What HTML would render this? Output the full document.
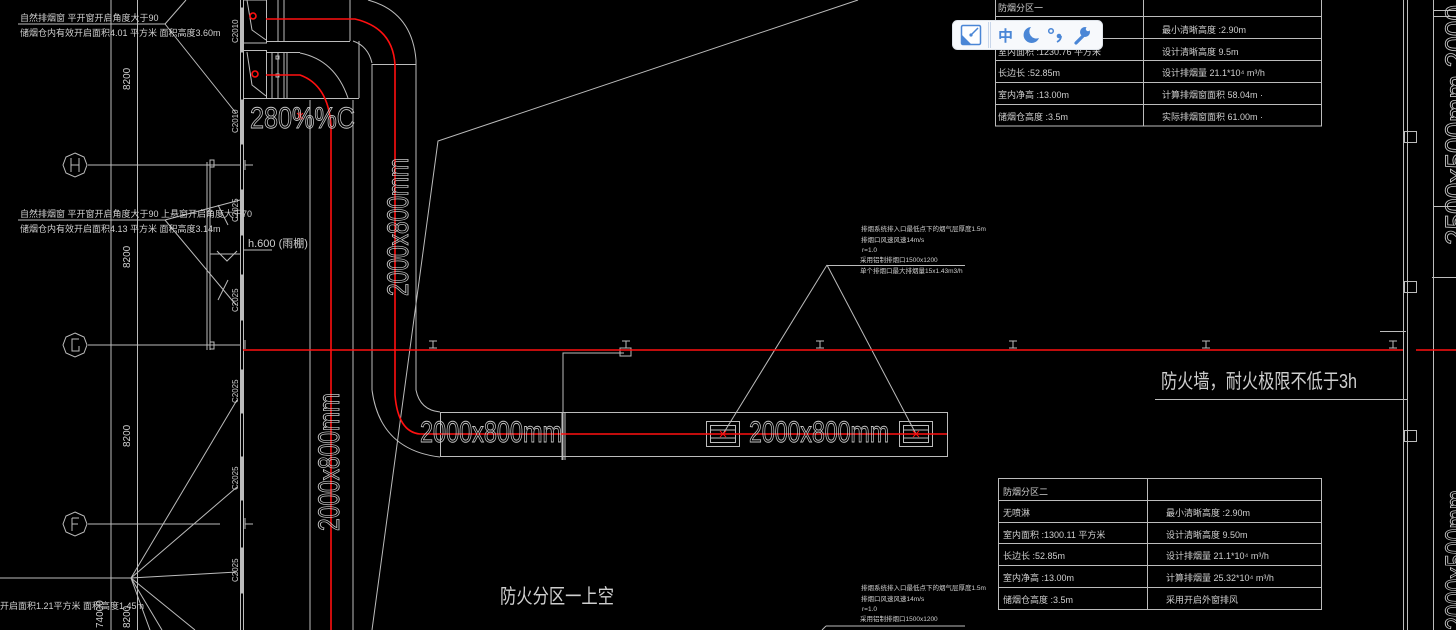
<!DOCTYPE html>
<html><head><meta charset="utf-8">
<style>
html,body{margin:0;padding:0;background:#000;width:1456px;height:630px;overflow:hidden}
svg{display:block}
text{font-family:"Liberation Sans","Noto Sans CJK SC",sans-serif;fill:#cfcfcf}
.t{font-size:9px}
.big{font-family:"Liberation Sans Narrow","Liberation Sans",sans-serif;fill:none;stroke:#c4c4c4;stroke-width:0.9}
.ax{font-size:15px;fill:none;stroke:#c4c4c4;stroke-width:0.8}
</style></head><body>
<svg width="1456" height="630" viewBox="0 0 1456 630" xmlns="http://www.w3.org/2000/svg">
<g stroke="#bcbcbc" stroke-width="1" fill="none">
<line x1="111" y1="0" x2="111" y2="630"/>
<line x1="137.5" y1="0" x2="137.5" y2="630"/>
<line x1="240.5" y1="0" x2="240.5" y2="630"/>
<line x1="243.5" y1="0" x2="243.5" y2="630"/>
<rect x="241" y="8" width="2" height="44" fill="#bcbcbc"/>
<rect x="241" y="100" width="2" height="44" fill="#bcbcbc"/>
<rect x="241" y="190" width="2" height="45" fill="#bcbcbc"/>
<rect x="241" y="275" width="2" height="45" fill="#bcbcbc"/>
<rect x="241" y="370" width="2" height="43" fill="#bcbcbc"/>
<rect x="241" y="457" width="2" height="43" fill="#bcbcbc"/>
<rect x="241" y="548" width="2" height="45" fill="#bcbcbc"/>
<polygon points="75,153 84,157 87,165 84,173 75,177 66,173 63,165 66,157"/>
<polygon points="75,333 84,337 87,345 84,353 75,357 66,353 63,345 66,337"/>
<polygon points="75,512 84,516 87,524 84,532 75,536 66,532 63,524 66,516"/>
<path d="M71 158 V172 M79 158 V172 M71 165 H79"/>
<path d="M79 339 H72 V351 H79 V346"/>
<path d="M72 518 V531 M72 518 H79 M72 524 H78"/>
<line x1="88" y1="165" x2="240" y2="165"/>
<line x1="88" y1="345" x2="240" y2="345"/>
<line x1="88" y1="524" x2="220" y2="524"/>
<line x1="207" y1="162" x2="207" y2="350"/>
<line x1="210" y1="162" x2="210" y2="350"/>
<rect x="210" y="160" width="4" height="7"/>
<rect x="210" y="342" width="4" height="7"/>
<line x1="210" y1="254" x2="240" y2="254"/>
<polyline points="217,251 227,261 237,251"/>
<line x1="245" y1="160" x2="245" y2="170"/><line x1="245" y1="165" x2="253" y2="165"/>
<line x1="245" y1="340" x2="245" y2="349"/>
<line x1="245" y1="518" x2="245" y2="529"/><line x1="245" y1="524" x2="253" y2="524"/>
<line x1="243" y1="250" x2="272" y2="250"/>
<line x1="18" y1="24" x2="165" y2="24"/>
<line x1="165" y1="24" x2="186" y2="0"/>
<line x1="165" y1="24" x2="236" y2="113"/>
<line x1="18" y1="220" x2="165" y2="220"/>
<line x1="165" y1="220" x2="240" y2="200"/>
<line x1="165" y1="220" x2="236" y2="305"/>
<line x1="218" y1="205" x2="228" y2="225"/>
<line x1="218" y1="300" x2="228" y2="280"/>
<line x1="0" y1="578" x2="131" y2="578"/>
<line x1="131" y1="578" x2="237" y2="400"/>
<line x1="131" y1="578" x2="237" y2="487"/>
<line x1="131" y1="578" x2="237" y2="572"/>
<line x1="131" y1="578" x2="150" y2="630"/>
<line x1="131" y1="578" x2="162" y2="630"/>
<line x1="131" y1="578" x2="195" y2="630"/>
<rect x="243.5" y="0" width="23" height="43"/>
<rect x="243.5" y="50.5" width="23" height="48"/>
<polyline points="247,0 252,30 266,40"/>
<polyline points="247,52 252,85 266,96"/>
<line x1="266" y1="41.5" x2="350" y2="41.5"/>
<line x1="350" y1="0" x2="350" y2="41"/>
<line x1="278" y1="0" x2="278" y2="42"/><line x1="284" y1="0" x2="284" y2="42"/>
<line x1="266" y1="98.5" x2="359" y2="98.5"/>
<line x1="359" y1="41" x2="359" y2="98"/>
<line x1="266" y1="52.5" x2="300" y2="52.5"/>
<line x1="272" y1="52" x2="272" y2="98"/><line x1="278" y1="52" x2="278" y2="98"/><line x1="284" y1="52" x2="284" y2="98"/><line x1="287" y1="52" x2="287" y2="98"/>
<path d="M300 53 Q335 60 348 98"/>
<rect x="276" y="56" width="3" height="3"/><rect x="276" y="74" width="3" height="3"/>
<path d="M368 0 Q412 12 416 60 L416 350"/>
<path d="M353 41 Q368 46 372 63"/>
<line x1="372" y1="64.5" x2="416" y2="64.5"/>
<line x1="372" y1="64" x2="372" y2="390"/>
<path d="M416 350 L416 390 Q420 410 440 412"/>
<path d="M372 390 Q380 450 440 457"/>
<line x1="310" y1="100" x2="310" y2="630"/>
<line x1="353" y1="100" x2="353" y2="630"/>
<rect x="440.5" y="412.5" width="507" height="44"/>
<line x1="562" y1="412" x2="562" y2="460"/><line x1="565" y1="412" x2="565" y2="460"/>
<polyline points="563,460 563,353 624,353"/>
<rect x="620" y="348" width="11" height="8"/>
<rect x="706.5" y="421.5" width="33" height="25"/><rect x="710.5" y="425.5" width="25" height="17"/>
<line x1="711" y1="430" x2="735" y2="430"/><line x1="711" y1="438" x2="735" y2="438"/>
<rect x="899.5" y="421.5" width="33" height="25"/><rect x="903.5" y="425.5" width="25" height="17"/>
<line x1="904" y1="430" x2="928" y2="430"/><line x1="904" y1="438" x2="928" y2="438"/>
<line x1="827" y1="265" x2="723" y2="434"/>
<line x1="827" y1="265" x2="916" y2="434"/>
<line x1="827" y1="265.5" x2="965" y2="265.5"/>
<line x1="826" y1="626" x2="965" y2="626"/>
<line x1="826" y1="626" x2="822" y2="630"/>
<polyline points="858,0 438,141 372,630"/>
<g>
<line x1="429" y1="341" x2="437" y2="341"/><line x1="433" y1="341" x2="433" y2="348"/><line x1="429" y1="348" x2="437" y2="348"/>
<line x1="622" y1="341" x2="630" y2="341"/><line x1="626" y1="341" x2="626" y2="348"/>
<line x1="816" y1="341" x2="824" y2="341"/><line x1="820" y1="341" x2="820" y2="348"/><line x1="816" y1="348" x2="824" y2="348"/>
<line x1="1009" y1="341" x2="1017" y2="341"/><line x1="1013" y1="341" x2="1013" y2="348"/><line x1="1009" y1="348" x2="1017" y2="348"/>
<line x1="1202" y1="341" x2="1210" y2="341"/><line x1="1206" y1="341" x2="1206" y2="348"/><line x1="1202" y1="348" x2="1210" y2="348"/>
<line x1="1389" y1="341" x2="1397" y2="341"/><line x1="1393" y1="341" x2="1393" y2="348"/><line x1="1389" y1="348" x2="1397" y2="348"/>
</g>
<line x1="1155" y1="399.5" x2="1407" y2="399.5"/>
<line x1="1403.5" y1="0" x2="1403.5" y2="630"/>
<line x1="1407.5" y1="0" x2="1407.5" y2="630"/>
<line x1="1433.5" y1="0" x2="1433.5" y2="630"/>
<line x1="1433" y1="206.5" x2="1456" y2="206.5"/>
<line x1="1432" y1="277.5" x2="1456" y2="277.5"/>
<line x1="1380" y1="331.5" x2="1406" y2="331.5"/>
<rect x="1404.5" y="131.5" width="12" height="11"/>
<rect x="1404.5" y="281.5" width="12" height="11"/>
<rect x="1404.5" y="430.5" width="12" height="11"/>
<line x1="1433" y1="10.5" x2="1456" y2="10.5"/>
<line x1="1433" y1="16.5" x2="1456" y2="16.5"/>
<rect x="995.5" y="-1" width="326" height="127"/>
<line x1="1143.5" y1="0" x2="1143.5" y2="126"/>
<line x1="995" y1="16.5" x2="1321" y2="16.5"/>
<line x1="995" y1="38.5" x2="1321" y2="38.5"/>
<line x1="995" y1="60.5" x2="1321" y2="60.5"/>
<line x1="995" y1="82.5" x2="1321" y2="82.5"/>
<line x1="995" y1="104.5" x2="1321" y2="104.5"/>
<rect x="998.5" y="478.5" width="323" height="131"/>
<line x1="1147.5" y1="478" x2="1147.5" y2="609"/>
<line x1="998" y1="500.5" x2="1321" y2="500.5"/>
<line x1="998" y1="522.5" x2="1321" y2="522.5"/>
<line x1="998" y1="543.5" x2="1321" y2="543.5"/>
<line x1="998" y1="565.5" x2="1321" y2="565.5"/>
<line x1="998" y1="587.5" x2="1321" y2="587.5"/>
</g>
<g stroke="#ff1010" stroke-width="1.6" fill="none">
<line x1="243" y1="350" x2="1403" y2="350"/>
<line x1="1416" y1="350" x2="1456" y2="350"/>
<path d="M266 19 L355 19 Q393 28 395 65 L395 395 Q398 432 420 434 L947 434"/>
<path d="M266 75 L300 75 Q328 85 331 125 L331 630"/>
<circle cx="253" cy="16" r="3"/>
<circle cx="255" cy="74" r="3"/>
<path d="M297 113 l6 6 M303 113 l-6 6 M300 112 v8" stroke-width="1"/>
<path d="M720 431 l6 6 M726 431 l-6 6 M913 431 l6 6 M919 431 l-6 6" stroke-width="1"/>
</g>

<g class="t">
<text x="20" y="21">自然排烟窗 平开窗开启角度大于90</text>
<text x="20" y="36">储烟仓内有效开启面积4.01 平方米   面积高度3.60m</text>
<text x="20" y="217">自然排烟窗 平开窗开启角度大于90    上悬窗开启角度大于70</text>
<text x="20" y="232">储烟仓内有效开启面积4.13 平方米   面积高度3.14m</text>
<text x="0" y="609">开启面积1.21平方米  面积高度1.45m</text>
<text x="248" y="247" style="font-size:11px">h.600 (雨棚)</text>
</g>
<g class="t" style="font-size:10px">
<text transform="translate(130,90) rotate(-90)">8200</text>
<text transform="translate(130,268) rotate(-90)">8200</text>
<text transform="translate(130,447) rotate(-90)">8200</text>
<text transform="translate(130,628) rotate(-90)">8200</text>
<text transform="translate(103,628) rotate(-90)">74000</text>
<text transform="translate(238,43) rotate(-90)" style="font-size:8px">C2010</text>
<text transform="translate(238,133) rotate(-90)" style="font-size:8px">C2010</text>
<text transform="translate(238,222) rotate(-90)" style="font-size:8px">C2025</text>
<text transform="translate(238,312) rotate(-90)" style="font-size:8px">C2025</text>
<text transform="translate(238,403) rotate(-90)" style="font-size:8px">C2025</text>
<text transform="translate(238,490) rotate(-90)" style="font-size:8px">C2025</text>
<text transform="translate(238,582) rotate(-90)" style="font-size:8px">C2025</text>
</g>
<text x="250" y="128" class="big" style="font-size:30px" textLength="105" lengthAdjust="spacingAndGlyphs">280%%C</text>
<text transform="translate(408,296) rotate(-90)" class="big" style="font-size:30px" textLength="138" lengthAdjust="spacingAndGlyphs">2000x800mm</text>
<text transform="translate(339,531) rotate(-90)" class="big" style="font-size:30px" textLength="138" lengthAdjust="spacingAndGlyphs">2000x800mm</text>
<text x="420" y="442" class="big" style="font-size:30px" textLength="142" lengthAdjust="spacingAndGlyphs">2000x800mm</text>
<text x="749" y="442" class="big" style="font-size:30px" textLength="140" lengthAdjust="spacingAndGlyphs">2000x800mm</text>
<text transform="translate(1466,245) rotate(-90)" class="big" style="font-size:30px" textLength="240" lengthAdjust="spacingAndGlyphs">2500x500mm  2000</text>
<text transform="translate(1466,630) rotate(-90)" class="big" style="font-size:30px" textLength="140" lengthAdjust="spacingAndGlyphs">2000x500mm</text>
<text x="1161" y="388" style="font-size:20px" textLength="196" lengthAdjust="spacingAndGlyphs">防火墙，耐火极限不低于3h</text>
<text x="500" y="603" style="font-size:20px" textLength="114" lengthAdjust="spacingAndGlyphs">防火分区一上空</text>
<g style="font-size:6.5px">
<text x="861" y="231">排烟系统排入口最低点下的烟气层厚度1.5m</text>
<text x="861" y="242">排烟口风速风速14m/s</text>
<text x="862" y="252">r=1.0</text>
<text x="860" y="262">采用铝制排烟口1500x1200</text>
<text x="860" y="273">单个排烟口最大排烟量15x1.43m3/h</text>
<text x="861" y="590">排烟系统排入口最低点下的烟气层厚度1.5m</text>
<text x="861" y="601">排烟口风速风速14m/s</text>
<text x="862" y="611">r=1.0</text>
<text x="860" y="621">采用铝制排烟口1500x1200</text>
</g>
<g class="t">
<text x="998" y="11">防烟分区一</text>
<text x="998" y="55">室内面积    :1230.76  平方米</text>
<text x="998" y="76">长边长   :52.85m</text>
<text x="998" y="98">室内净高    :13.00m</text>
<text x="998" y="120">储烟仓高度      :3.5m</text>
<text x="1162" y="33">最小清晰高度      :2.90m</text>
<text x="1162" y="55">设计清晰高度          9.5m</text>
<text x="1162" y="76">设计排烟量         21.1*10⁴ m³/h</text>
<text x="1162" y="98">计算排烟窗面积        58.04m  ·</text>
<text x="1162" y="120">实际排烟窗面积        61.00m  ·</text>
<text x="1003" y="495">防烟分区二</text>
<text x="1003" y="516">无喷淋</text>
<text x="1003" y="538">室内面积    :1300.11  平方米</text>
<text x="1003" y="559">长边长   :52.85m</text>
<text x="1003" y="581">室内净高    :13.00m</text>
<text x="1003" y="603">储烟仓高度      :3.5m</text>
<text x="1166" y="516">最小清晰高度      :2.90m</text>
<text x="1166" y="538">设计清晰高度         9.50m</text>
<text x="1166" y="559">设计排烟量        21.1*10⁴ m³/h</text>
<text x="1166" y="581">计算排烟量        25.32*10⁴ m³/h</text>
<text x="1166" y="603">采用开启外窗排风</text>
</g>

<!-- toolbar -->
<rect x="952.5" y="20.5" width="150" height="29" rx="5" fill="#f7f9fc" stroke="#dfe4ea"/>
<rect x="961.5" y="25.5" width="19" height="19" rx="1.5" fill="#fff" stroke="#4a86d6" stroke-width="1.5"/>
<path d="M962 35 L962 44 L971 44 Z" fill="#4a86d6"/>
<line x1="971" y1="35" x2="978" y2="28" stroke="#4a86d6" stroke-width="1.5"/>
<circle cx="971" cy="35" r="1.6" fill="#4a86d6"/>
<line x1="988.5" y1="22" x2="988.5" y2="48" stroke="#c8d6ea"/>
<line x1="990.5" y1="22" x2="990.5" y2="48" stroke="#c8d6ea"/>
<text x="998" y="41" style="fill:#4a86d6;font-size:15px;font-weight:bold">中</text>
<path d="M1031 27 A8 8 0 1 0 1039 38 A7 7 0 0 1 1031 27 Z" fill="#4a86d6"/>
<circle cx="1051" cy="31" r="2.3" fill="none" stroke="#4a86d6" stroke-width="1.5"/>
<circle cx="1059" cy="36" r="2.3" fill="#4a86d6"/>
<path d="M1061 36 Q1061 40 1057 42" fill="none" stroke="#4a86d6" stroke-width="1.8"/>
<line x1="1076" y1="43" x2="1083" y2="36" stroke="#4a86d6" stroke-width="3.2" stroke-linecap="round"/>
<circle cx="1085" cy="32" r="5" fill="#4a86d6"/>
<circle cx="1088" cy="29" r="2.2" fill="#f7f9fc"/>
</svg>
</body></html>
